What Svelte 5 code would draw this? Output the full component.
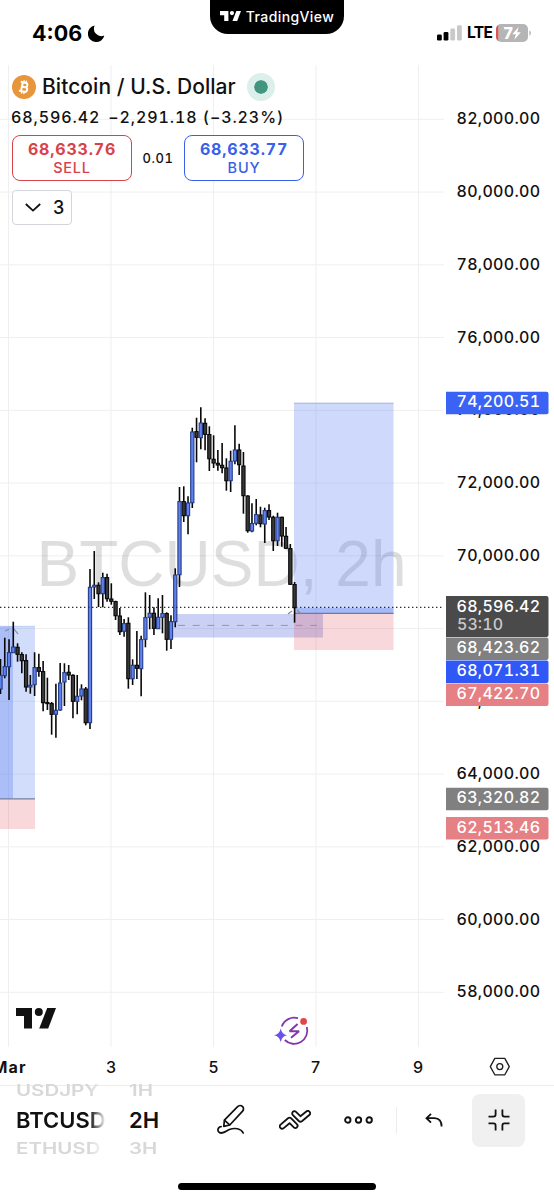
<script>
  // x position of candle i is FIRST_X + i * STEP
  const FIRST_X = 0.5;
  const STEP = 4.262;

  const gridX = [8.5, 111, 213.5, 316, 418.5];
  const prices = Array.from({ length: 13 }, (_, i) => 82000 - i * 2000);

  const priceToY = (price) => 119.3 + ((82000 - price) / 2000) * 72.75;
  const format = (price) =>
    price.toLocaleString('en-US', { minimumFractionDigits: 2, maximumFractionDigits: 2 });

  // high, body top, body bottom, low, up
  const candles = [
    [659, 675, 689, 694, 1],
    [637.7, 666.3, 675.7, 678.3, 1],
    [639.3, 652.3, 666.7, 700, 1],
    [621.7, 646.7, 652.7, 653, 1],
    [643.3, 647, 654.3, 661.7, 0],
    [652.3, 654.3, 660.7, 673.3, 0],
    [654.3, 660.3, 687, 691.7, 0],
    [675, 685, 687, 693.7, 1],
    [652.3, 667.3, 684.7, 696, 1],
    [653.7, 667.3, 671.3, 676.7, 0],
    [661, 671.3, 702.7, 711.3, 0],
    [677.7, 702.3, 703.3, 710, 0],
    [702, 703.3, 714.3, 734.7, 0],
    [683.7, 710, 714.3, 737.7, 1],
    [663, 682.7, 710, 710.7, 1],
    [663.3, 672.3, 682, 706, 1],
    [665, 672, 675, 680, 0],
    [674.3, 675, 701.3, 718.3, 0],
    [675, 696, 701.3, 714.3, 1],
    [684.3, 688.7, 696, 700.3, 1],
    [687, 688.7, 722.7, 725.3, 0],
    [569, 587, 722.7, 729, 1],
    [551, 585, 587, 599, 1],
    [582.3, 585, 593.7, 607, 0],
    [572.7, 577.3, 593.7, 607.3, 1],
    [573.7, 577.3, 598.7, 601.7, 0],
    [583.3, 598.7, 601.3, 604.7, 0],
    [600.7, 601.3, 615.7, 620, 0],
    [608, 615.7, 631.7, 635, 0],
    [619, 623.3, 631.3, 636.7, 1],
    [617.3, 623, 678.7, 688.7, 0],
    [659.3, 665, 678.7, 685, 1],
    [631, 665, 668.3, 679, 0],
    [635.7, 639.3, 668.7, 696.3, 1],
    [592.3, 617.3, 639.3, 647.3, 1],
    [595, 613, 617.3, 629.3, 1],
    [607.3, 613, 628.3, 635, 0],
    [598.3, 617, 628.7, 628.7, 1],
    [595, 613.3, 617.3, 633.3, 1],
    [612.3, 613.3, 639.3, 650.7, 0],
    [615.3, 621.3, 639.3, 649, 1],
    [568.3, 574.7, 621.7, 627.3, 1],
    [487, 501.3, 574.7, 587, 1],
    [486.3, 501.3, 515.7, 522, 0],
    [496.3, 502.7, 515.7, 534.3, 1],
    [427.7, 431.7, 502.7, 508, 1],
    [417.7, 431.3, 437.3, 462.3, 0],
    [407.3, 422.7, 437.7, 449.3, 1],
    [418.3, 423, 434.3, 450.3, 0],
    [426.3, 434.3, 458.7, 471, 0],
    [435.3, 459, 463, 468, 0],
    [450, 463, 465, 470.7, 0],
    [443, 465, 467.7, 473.3, 0],
    [458.3, 467.7, 480.7, 490.7, 0],
    [450.7, 461, 480.7, 492, 1],
    [425.3, 449.7, 461, 464.3, 1],
    [443.7, 449.7, 464.7, 475, 0],
    [452, 465.7, 495.7, 513.7, 0],
    [495.3, 495.7, 530.7, 532.7, 0],
    [503.3, 523.3, 531, 532.3, 1],
    [499, 514.3, 523.3, 525.3, 1],
    [506.7, 514.7, 523.7, 527.3, 0],
    [507.7, 510.3, 524, 543, 1],
    [504.3, 510.3, 517, 520, 0],
    [515.7, 517, 540.7, 551, 0],
    [512.7, 517, 540.7, 546, 1],
    [516.7, 517, 536, 546.7, 0],
    [527, 536, 548.3, 548.7, 0],
    [544, 548.3, 584.3, 585, 0],
    [582, 584.3, 607.7, 622.7, 0]
  ];

  const tags = [
    { text: '74,200.51', y: 391.7, color: '#3a62f5' },
    { text: '68,423.62', y: 637.5, color: '#808080' },
    { text: '68,071.31', y: 660.5, color: '#2f58f6' },
    { text: '67,422.70', y: 683.5, color: '#e58084' },
    { text: '63,320.82', y: 787.7, color: '#808080' },
    { text: '62,513.46', y: 817, color: '#e58084' }
  ];

  const days = [
    { text: '3', x: 111 },
    { text: '5', x: 213.5 },
    { text: '7', x: 315.5 },
    { text: '9', x: 418 }
  ];

  const symbols = ['USDJPY', 'BTCUSD', 'ETHUSD'];
  const intervals = ['1H', '2H', '3H'];
</script>

{#snippet logo(width)}
  <svg {width} viewBox="0 0 40 20.5" fill="currentColor">
    <path d="M0 0H16V20.5H8V8H0Z" />
    <circle cx="22.8" cy="4" r="4" />
    <path d="M31.2 0H40L32.2 20.5H23.2Z" />
  </svg>
{/snippet}

{#snippet wheel(items, kind)}
  <div class={`wheel ${kind}`}>
    {#each items as item, i}
      <span class={i === 1 ? 'current' : 'ghost'}>{item}</span>
    {/each}
  </div>
{/snippet}

<div class="screen">
  <header class="status">
    <div class="clock">
      <span>4:06</span>
      <svg width="17" height="18" viewBox="0 0 17 18">
        <path d="M6.7 0.6A8.3 8.3 0 1 0 16.3 10.4A7.3 7.3 0 0 1 6.7 0.6Z" fill="#000" />
      </svg>
    </div>
    <div class="island">
      {@render logo(21)}
      <span>TradingView</span>
    </div>
    <div class="signals">
      <svg width="25" height="16" viewBox="0 0 25 16">
        <rect x="0" y="9.5" width="4.8" height="6" rx="1.3" />
        <rect x="6.6" y="7" width="4.8" height="8.5" rx="1.3" />
        <rect x="13.3" y="3.6" width="4.8" height="11.9" rx="1.3" fill="#c9c9c9" />
        <rect x="20" y="0.2" width="4.8" height="15.3" rx="1.3" fill="#c9c9c9" />
      </svg>
      <span class="lte">LTE</span>
      <svg class="battery" width="36" height="18" viewBox="0 0 36 18">
        <rect width="32" height="18" rx="5" fill="#b5b5b5" />
        <path d="M2.2 1.1A5 5 0 0 0 0 5V13A5 5 0 0 0 2.2 16.9Z" fill="#e8524c" />
        <path d="M33.3 6.5C35.5 7.3 35.5 10.8 33.3 11.6Z" fill="#b5b5b5" />
        <text x="7.4" y="14.8" font-size="16" font-weight="800" fill="#fff">7</text>
        <path d="M22.6 3L16.2 10.2H19.8L18.4 15.8L24.8 8.2H21.2Z" fill="#fff" />
      </svg>
    </div>
  </header>

  <main class="chart">
    <svg class="plot" width="554" height="1020" viewBox="0 65 554 1020">
      <g stroke="#efefef" stroke-width="1">
        {#each gridX as x}
          <line x1={x} x2={x} y1="65" y2="1047" />
        {/each}
        {#each prices as price}
          <line x1="0" x2="444" y1={priceToY(price)} y2={priceToY(price)} />
        {/each}
      </g>

      <text class="watermark" x="36.5" y="586" textLength="370" lengthAdjust="spacingAndGlyphs">BTCUSD, 2h</text>

      <!-- closed long position -->
      <g>
        <rect x="0" y="626" width="35" height="173" fill="#4a74f0" fill-opacity="0.25" />
        <rect x="0" y="626" width="13" height="173" fill="#4a74f0" fill-opacity="0.28" />
        <rect x="0" y="799" width="35" height="30" fill="#e0474f" fill-opacity="0.21" />
        <line x1="0" x2="35" y1="626.3" y2="626.3" stroke="#b9c9f5" stroke-width="0.7" />
        <line x1="0" x2="35" y1="798.8" y2="798.8" stroke="#76809f" stroke-width="1.3" />
        <path d="M5 631L9 629.3M18 634L14 629" stroke="#84899b" stroke-width="1.2" fill="none" />
      </g>

      <!-- demand zone -->
      <rect x="173" y="614" width="150" height="23.5" fill="#3d56d8" fill-opacity="0.27" />

      <!-- open long position -->
      <g>
        <rect x="294" y="403" width="99.5" height="210.5" fill="#4a74f0" fill-opacity="0.27" />
        <rect x="294" y="608" width="99.5" height="5.5" fill="#4a74f0" fill-opacity="0.3" />
        <rect x="294" y="613.5" width="99.5" height="36.5" fill="#e0474f" fill-opacity="0.21" />
        <line x1="294" x2="393.5" y1="403.2" y2="403.2" stroke="#a3b4e2" stroke-width="1" />
        <line x1="294" x2="393.5" y1="613.4" y2="613.4" stroke="#727a95" stroke-width="1.4" />
        <path d="M288 614L292 611M297 610L301 614" stroke="#888" stroke-width="1.2" fill="none" />
      </g>
      <line x1="178" x2="317" y1="625.4" y2="625.4" stroke="#9296ad" stroke-width="1" stroke-dasharray="7 7.7" />

      {#each candles as [high, top, bottom, low, up], i}
        {@const x = FIRST_X + i * STEP}
        <line x1={x} x2={x} y1={high} y2={low} stroke="#080808" stroke-width="1.6" />
        <rect
          x={x - 1.6}
          y={top + 0.3}
          width="3.2"
          height={Math.max(bottom - top - 0.3, 1)}
          fill={up ? '#5f82ee' : '#383838'}
          stroke={up ? '#263c88' : '#080808'}
          stroke-width="1.1"
        />
      {/each}

      <line x1="0" x2="444" y1="607.4" y2="607.4" stroke="#2b2b2b" stroke-width="1.2" stroke-dasharray="1.4 2.6" />

      <g class="axis">
        {#each prices as price}
          <text x="456.5" y={priceToY(price) + 5} textLength="83.5">{format(price)}</text>
        {/each}
      </g>

      <g class="tags">
        {#each tags as tag}
          <path d={`M446 ${tag.y}H546.5a2 2 0 0 1 2 2v18.5a2 2 0 0 1 -2 2H446Z`} fill={tag.color} />
          <text x="456.5" y={tag.y + 15.6} textLength="83.5">{tag.text}</text>
        {/each}
        <path d="M446 596H546.5a2 2 0 0 1 2 2v37a2 2 0 0 1 -2 2H446Z" fill="#4a4a4a" />
        <text x="456.5" y="611.8" textLength="83.5">68,596.42</text>
        <text class="countdown" x="457" y="630.3" textLength="46">53:10</text>
      </g>

      <g class="days">
        <text class="month" x="-7.5" y="1073" textLength="33">Mar</text>
        {#each days as day}
          <text x={day.x} y="1073" text-anchor="middle">{day.text}</text>
        {/each}
      </g>

      <g fill="none" stroke="#1c1c1c" stroke-width="1.3">
        <path d="M494.8 1058.4H504.8L509.3 1066.6L504.8 1074.8H494.8L490.3 1066.6Z" stroke-linejoin="round" />
        <circle cx="499.8" cy="1066.6" r="3" />
      </g>

      <g fill="none" stroke="#8238a8" stroke-width="1.8">
        <path d="M281.8 1026.5A13.2 13.2 0 0 1 298 1018.2" />
        <path d="M306.8 1027A13.2 13.2 0 0 1 284.8 1040" />
        <path d="M297.6 1024L289.6 1031.2H299L291 1037.8" stroke-linejoin="bevel" stroke-width="2" />
      </g>
      <circle cx="303.6" cy="1021.4" r="3.4" fill="#e2464b" />
      <path d="M280.7 1028.4Q281.8 1034.2 287 1035.2Q281.8 1036.2 280.7 1042Q279.6 1036.2 274 1035.2Q279.6 1034.2 280.7 1028.4Z" fill="#6a50ee" />
    </svg>

    <section class="legend">
      <div class="title">
        <svg width="24" height="24" viewBox="0 0 24 24">
          <circle cx="12" cy="12" r="12" fill="#e8963c" />
          <g fill="none" stroke="#fff" stroke-width="2" transform="rotate(12 12 12)">
            <path d="M7.8 7.6H12.7a2.2 2.2 0 0 1 0 4.4H9.8M9.8 12H13.4a2.3 2.3 0 0 1 0 4.6H7.8M9.9 7.6V16.6" />
            <path d="M10.8 5.2V7.6M13.2 5.2V7.6M10.8 16.6V19M13.2 16.6V19" stroke-width="1.3" />
          </g>
        </svg>
        <h1>Bitcoin / U.S. Dollar</h1>
        <span class="market"></span>
      </div>
      <div class="quote">
        <span>68,596.42</span>
        <span>−2,291.18 (−3.23%)</span>
      </div>
      <div class="trade">
        <button class="sell"><b>68,633.76</b><span>SELL</span></button>
        <span class="spread">0.01</span>
        <button class="buy"><b>68,633.77</b><span>BUY</span></button>
      </div>
      <button class="indicators">
        <svg width="16" height="9" viewBox="0 0 16 9">
          <path d="M0.8 1L8 7.6L15.2 1" fill="none" stroke="#111" stroke-width="1.8" />
        </svg>
        <span>3</span>
      </button>
    </section>

    <div class="brand">{@render logo(40)}</div>
  </main>

  <footer class="toolbar">
    {@render wheel(symbols, 'symbols')}
    {@render wheel(intervals, 'intervals')}
    <div class="tools">
      <svg width="28" height="32" viewBox="0 0 28 32">
        <g fill="none" stroke="#111" stroke-width="1.7" stroke-linejoin="round" stroke-linecap="round">
          <path d="M6.8 22.3L7.4 16.2L20.6 2.6A3.2 3.2 0 0 1 25.6 7.2L12.8 21Z" />
          <path d="M7.6 16.4L12.4 20.6" />
          <path d="M4.2 22.6A3.3 3.3 0 0 0 1.4 27.5C4 31.3 8.5 27.2 12.4 25.5C17.5 23.6 24 24.3 26.2 29" />
        </g>
      </svg>
      <svg width="32" height="20" viewBox="0 0 32 20">
        <g fill="none" stroke="#111" stroke-width="1.8" stroke-linejoin="round">
          <path d="M1.6 14.6L9 8.2Q10.6 7 12.2 8.4L17.9 14.2A2.2 2.2 0 0 1 14.8 17.4L10.6 13.2L4.7 18.1A2.3 2.3 0 0 1 1.6 14.6Z" />
          <path d="M17 1.8L21.4 6.2L27.3 1.5A2.3 2.3 0 0 1 30.3 5L22.9 11.2Q21.3 12.4 19.8 11L13.9 5.1A2.2 2.2 0 0 1 17 1.8Z" />
        </g>
      </svg>
      <svg width="29" height="8" viewBox="0 0 29 8" fill="none" stroke="#111" stroke-width="1.9">
        <circle cx="3.8" cy="4" r="2.7" />
        <circle cx="14.5" cy="4" r="2.7" />
        <circle cx="25.2" cy="4" r="2.7" />
      </svg>
    </div>
    <span class="divider"></span>
    <svg class="undo" width="18" height="15" viewBox="0 0 18 15">
      <path d="M6 0.9L1.5 5.2L6 9.6M1.5 5.2H9.5Q16.6 5.6 16.6 13.6" fill="none" stroke="#111" stroke-width="1.8" />
    </svg>
    <button class="collapse">
      <svg width="22" height="22" viewBox="0 0 22 22">
        <path
          d="M7.6 0.5V5.6Q7.6 7.6 5.6 7.6H0.5M14.4 0.5V5.6Q14.4 7.6 16.4 7.6H21.5M7.6 21.5V16.4Q7.6 14.4 5.6 14.4H0.5M14.4 21.5V16.4Q14.4 14.4 16.4 14.4H21.5"
          fill="none"
          stroke="#111"
          stroke-width="1.8"
        />
      </svg>
    </button>
  </footer>
  <div class="home"><span></span></div>
</div>

<style>
  :global(body) {
    margin: 0;
    background: #fff;
  }

  .screen {
    width: 554px;
    height: 1200px;
    display: flex;
    flex-direction: column;
    overflow: hidden;
    background: #fff;
    color: #111;
    font-family: Inter, 'Liberation Sans', sans-serif;
  }

  .screen svg {
    display: block;
    flex: none;
  }

  button {
    margin: 0;
    padding: 0;
    background: #fff;
    color: inherit;
    font: inherit;
  }

  .status {
    height: 65px;
    flex: none;
    display: grid;
    grid-template-columns: 210px 134px 1fr;
    align-items: start;
    color: #000;
  }

  .clock {
    display: flex;
    align-items: center;
    gap: 6px;
    padding: 20px 0 0 32px;
    font-size: 21.5px;
    font-weight: 700;
    line-height: 27px;
  }

  .island {
    height: 34px;
    display: flex;
    align-items: center;
    justify-content: center;
    gap: 5px;
    background: #000;
    color: #fff;
    border-radius: 0 0 18px 18px;
    font-size: 14px;
    font-weight: 500;
    letter-spacing: 0.4px;
    box-sizing: border-box;
    padding-bottom: 2px;
  }

  .signals {
    display: flex;
    align-items: center;
    padding: 24px 0 0 93px;
  }

  .lte {
    width: 25px;
    margin-left: 5px;
    font-size: 15.5px;
    line-height: 18px;
    font-weight: 700;
    letter-spacing: -0.6px;
  }

  .battery {
    margin-left: 4px;
  }

  .chart {
    position: relative;
    height: 1020px;
    flex: none;
  }

  .watermark {
    font-family: 'Liberation Sans', sans-serif;
    font-size: 65px;
    fill: #000;
    fill-opacity: 0.13;
  }

  .axis text,
  .tags text {
    font-size: 16px;
    font-weight: 500;
    font-variant-numeric: tabular-nums;
    fill: #111;
  }

  .tags text {
    fill: #fff;
  }

  .tags .countdown {
    fill: #c9c9c9;
  }

  .days text {
    font-size: 16px;
    font-weight: 500;
    fill: #111;
  }

  .days .month {
    font-weight: 700;
  }

  .legend {
    position: absolute;
    top: 7px;
    left: 11px;
  }

  .title {
    display: flex;
    align-items: center;
    gap: 6px;
    height: 30px;
    padding-left: 1px;
  }

  h1 {
    margin: 0;
    font-size: 21px;
    font-weight: 500;
    line-height: 30px;
    letter-spacing: 0.05px;
    white-space: nowrap;
  }

  .market {
    width: 14px;
    height: 14px;
    margin-left: 5px;
    border: 7.5px solid #dcefeb;
    border-radius: 50%;
    background: #42967f;
    background-clip: padding-box;
  }

  .quote {
    display: flex;
    gap: 8px;
    height: 32px;
    font-size: 16px;
    font-weight: 500;
    font-variant-numeric: tabular-nums;
    line-height: 31px;
    letter-spacing: 0.9px;
    white-space: nowrap;
  }

  .trade {
    display: flex;
    align-items: center;
    height: 46px;
    margin-left: 1px;
    padding-top: 1px;
    font-variant-numeric: tabular-nums;
  }

  .trade button {
    width: 120px;
    height: 46px;
    display: flex;
    flex-direction: column;
    align-items: center;
    justify-content: center;
    border: 1.5px solid;
    border-radius: 8px;
    letter-spacing: 0.8px;
  }

  .trade b {
    font-size: 16px;
    font-weight: 700;
    line-height: 20px;
    letter-spacing: 0.8px;
  }

  .trade button span {
    font-size: 14.5px;
    font-weight: 500;
    line-height: 18px;
  }

  .trade .sell {
    color: #d8434b;
  }

  .trade .buy {
    color: #3a5fe8;
  }

  .spread {
    width: 52px;
    text-align: center;
    font-size: 13px;
    font-weight: 500;
    letter-spacing: 0.5px;
  }

  .indicators {
    display: flex;
    align-items: center;
    gap: 12px;
    width: 60px;
    height: 35px;
    margin: 9px 0 0 1px;
    padding-left: 12px;
    box-sizing: border-box;
    border: 1px solid #d3d5da;
    border-radius: 4px;
    font-size: 18px;
    font-weight: 500;
  }

  .brand {
    position: absolute;
    left: 16px;
    top: 943px;
  }

  .toolbar {
    height: 68px;
    flex: none;
    display: flex;
    align-items: center;
    border-top: 1px solid #ececec;
  }

  .wheel {
    display: flex;
    flex-direction: column;
    justify-content: center;
    font-weight: 600;
  }

  .wheel span {
    white-space: nowrap;
  }

  .current {
    font-size: 22px;
    line-height: 30px;
  }

  .ghost {
    font-size: 20.5px;
    line-height: 28px;
    color: #d8d8d8;
    transform: scaleY(0.76);
  }

  .symbols {
    width: 90px;
    margin-left: 16px;
    overflow: hidden;
    mask-image: linear-gradient(to right, #000 82%, transparent 100%);
  }

  .intervals {
    margin-left: 23px;
    width: 32px;
  }

  .tools {
    display: flex;
    align-items: center;
    margin-left: 56px;
    gap: 33.5px;
  }

  .divider {
    width: 1px;
    height: 27px;
    margin-left: 23px;
    background: #ececec;
  }

  .undo {
    margin: 1px 0 0 28px;
  }

  .collapse {
    width: 53px;
    height: 53px;
    margin-left: 29px;
    display: flex;
    align-items: center;
    justify-content: center;
    border: 0;
    border-radius: 8px;
    background: #f0f0f0;
  }

  .home {
    flex: 1;
    display: flex;
    justify-content: center;
    align-items: flex-end;
  }

  .home span {
    width: 198px;
    height: 6.5px;
    margin-bottom: 10.5px;
    border-radius: 4px;
    background: #000;
  }
</style>
